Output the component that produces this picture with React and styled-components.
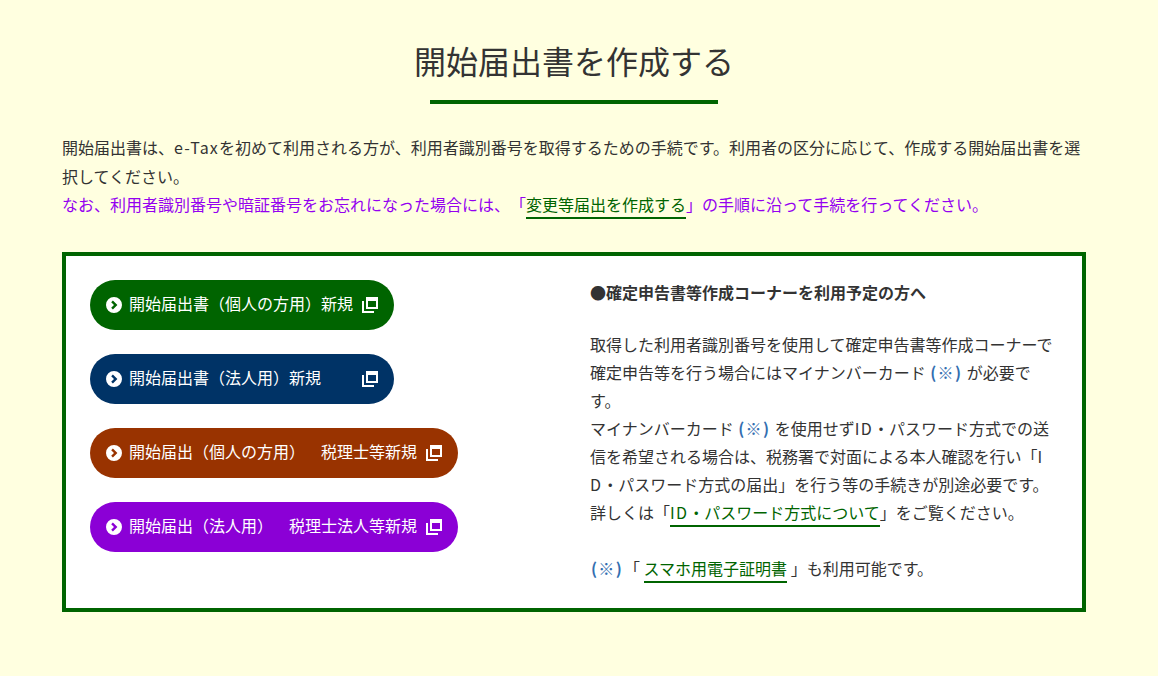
import React from 'react';
import styled, { createGlobalStyle } from 'styled-components';

const GlobalStyle = createGlobalStyle`
  body {
    margin: 0;
    background: #ffffe0;
    color: #333;
    font-family: "Noto Sans CJK JP", "Noto Sans", sans-serif;
    font-size: 16px;
    text-spacing-trim: space-all;
  }
`;

const Page = styled.main`
  box-sizing: border-box;
  width: 1149px;
  height: 676px;
  padding: 39px 63px 0 62px;
`;

const Title = styled.h1`
  margin: 0 0 35px;
  padding-bottom: 17px;
  text-align: center;
  font-size: 32px;
  font-weight: 400;
  line-height: 42px;
  position: relative;
  &::after {
    content: '';
    position: absolute;
    left: 368px;
    bottom: -6px;
    width: 288px;
    height: 4px;
    background: #006400;
  }
`;

const Intro = styled.p`
  margin: 0 0 33px;
  line-height: 28.5px;
  word-break: break-all;
`;

const Purple = styled.span`
  color: #9400f0;
`;

const Latin = styled.span`
  letter-spacing: 1.2px;
`;

const TextLink = styled.a`
  color: #006400;
  text-decoration: none;
  padding-bottom: 1px;
  border-bottom: 2px solid #006400;
`;

const Box = styled.section`
  box-sizing: border-box;
  height: 360px;
  border: 4px solid #006400;
  background: #fff;
  padding: 24px 24px 0;
  display: grid;
  grid-template-columns: 500px 466px;
`;

const ButtonList = styled.div`
  display: flex;
  flex-direction: column;
  align-items: flex-start;
  gap: 24px;
`;

const ActionButton = styled.a`
  box-sizing: border-box;
  height: 50px;
  width: ${p => p.$wide ? 368 : 304}px;
  border-radius: 25px;
  background: ${p => p.$color};
  color: #fff;
  display: flex;
  align-items: center;
  padding: 0 16px;
  line-height: 1;
`;

const ButtonLabel = styled.span`
  flex: 1;
  margin: -4px 0 0 7px;
  white-space: nowrap;
`;

const Notes = styled.div`
  line-height: 28px;
  word-break: break-all;
`;

const NoteTitle = styled.p`
  margin: -2px 0 24px;
  font-weight: 700;
  line-height: 28px;
`;

const NoteText = styled.p`
  margin: 0 0 28px;
`;

const Mark = styled.strong`
  color: #336eb0;
  letter-spacing: 1.3px;
  margin: 0 1px;
`;

const CircleIcon = () => (
  <svg width="16" height="16" viewBox="0 0 16 16" aria-hidden="true">
    <path
      fillRule="evenodd"
      fill="#fff"
      d="M8 0a8 8 0 1 1 0 16A8 8 0 0 1 8 0zM5.2 5.2 8 8l-2.8 2.8 1.7 1.7L11.4 8 6.9 3.5z"
    />
  </svg>
);

const WindowIcon = () => (
  <svg width="16" height="16" viewBox="0 0 16 16" aria-hidden="true">
    <path d="M4 0h12v12H4zM6 4v6h8V4z" fill="#fff" fillRule="evenodd" />
    <path d="M0 4h2v10h10v2H0z" fill="#fff" />
  </svg>
);

const buttons = [
  { label: '開始届出書（個人の方用）新規', color: '#006400' },
  { label: '開始届出書（法人用）新規', color: '#003366' },
  { label: '開始届出（個人の方用）　税理士等新規', color: '#993300', wide: true },
  { label: '開始届出（法人用）　税理士法人等新規', color: '#8b00d6', wide: true },
];

export default function App() {
  return (
    <Page>
      <GlobalStyle />
      <Title>開始届出書を作成する</Title>
      <Intro>
        開始届出書は、<Latin>e-Tax</Latin>を初めて利用される方が、利用者識別番号を取得するための手続です。利用者の区分に応じて、作成する開始届出書を選択してください。
        <br />
        <Purple>
          なお、利用者識別番号や暗証番号をお忘れになった場合には、「<TextLink>変更等届出を作成する</TextLink>」の手順に沿って手続を行ってください。
        </Purple>
      </Intro>
      <Box>
        <ButtonList>
          {buttons.map(button => (
            <ActionButton key={button.label} $color={button.color} $wide={button.wide}>
              <CircleIcon />
              <ButtonLabel>{button.label}</ButtonLabel>
              <WindowIcon />
            </ActionButton>
          ))}
        </ButtonList>
        <Notes>
          <NoteTitle>●確定申告書等作成コーナーを利用予定の方へ</NoteTitle>
          <NoteText>
            取得した利用者識別番号を使用して確定申告書等作成コーナーで確定申告等を行う場合にはマイナンバーカード <Mark>(※)</Mark> が必要です。
            <br />
            マイナンバーカード <Mark>(※)</Mark> を使用せず<Latin>ID</Latin>・パスワード方式での送信を希望される場合は、税務署で対面による本人確認を行い「<Latin>ID</Latin>・パスワード方式の届出」を行う等の手続きが別途必要です。
            <br />
            詳しくは「<TextLink><Latin>ID</Latin>・パスワード方式について</TextLink>」をご覧ください。
          </NoteText>
          <NoteText>
            <Mark>(※)</Mark>「 <TextLink>スマホ用電子証明書</TextLink> 」も利用可能です。
          </NoteText>
        </Notes>
      </Box>
    </Page>
  );
}
